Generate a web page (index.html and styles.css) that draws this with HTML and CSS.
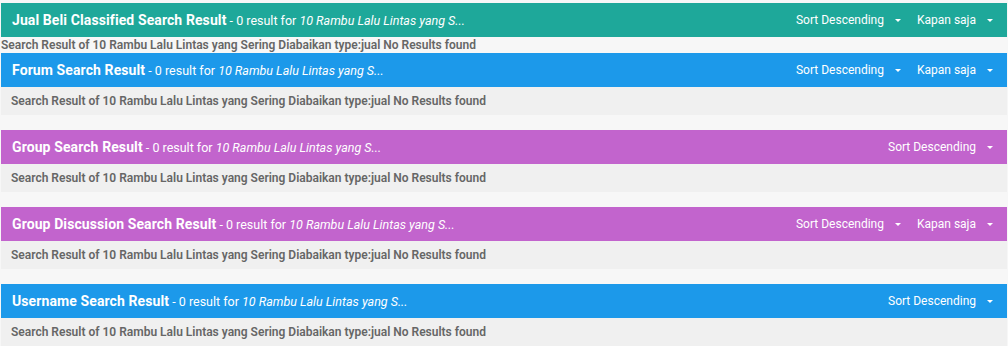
FILE: index.html
```html
<!DOCTYPE html>
<html lang="id">
<head>
    <meta charset="UTF-8">
    <meta name="viewport" content="width=device-width, initial-scale=1.0">
    <title>Search Result</title>
    <link rel="stylesheet" href="styles.css">
</head>
<body>
    <div class="results">
        <section class="result-block plain">
            <div class="result-head teal">
                <div class="head-title"><b>Jual Beli Classified Search Result</b> - 0 result for <i>10 Rambu Lalu Lintas yang S...</i></div>
                <div class="head-tools">
                    <span class="drop">Sort Descending <span class="caret"></span></span>
                    <span class="drop">Kapan saja <span class="caret"></span></span>
                </div>
            </div>
            <div class="result-body">Search Result of 10 Rambu Lalu Lintas yang Sering Diabaikan type:jual No Results found</div>
        </section>

        <section class="result-block">
            <div class="result-head blue">
                <div class="head-title"><b>Forum Search Result</b> - 0 result for <i>10 Rambu Lalu Lintas yang S...</i></div>
                <div class="head-tools">
                    <span class="drop">Sort Descending <span class="caret"></span></span>
                    <span class="drop">Kapan saja <span class="caret"></span></span>
                </div>
            </div>
            <div class="result-body">Search Result of 10 Rambu Lalu Lintas yang Sering Diabaikan type:jual No Results found</div>
        </section>

        <section class="result-block">
            <div class="result-head purple">
                <div class="head-title"><b>Group Search Result</b> - 0 result for <i>10 Rambu Lalu Lintas yang S...</i></div>
                <div class="head-tools">
                    <span class="drop">Sort Descending <span class="caret"></span></span>
                </div>
            </div>
            <div class="result-body">Search Result of 10 Rambu Lalu Lintas yang Sering Diabaikan type:jual No Results found</div>
        </section>

        <section class="result-block">
            <div class="result-head purple">
                <div class="head-title"><b>Group Discussion Search Result</b> - 0 result for <i>10 Rambu Lalu Lintas yang S...</i></div>
                <div class="head-tools">
                    <span class="drop">Sort Descending <span class="caret"></span></span>
                    <span class="drop">Kapan saja <span class="caret"></span></span>
                </div>
            </div>
            <div class="result-body">Search Result of 10 Rambu Lalu Lintas yang Sering Diabaikan type:jual No Results found</div>
        </section>

        <section class="result-block">
            <div class="result-head blue">
                <div class="head-title"><b>Username Search Result</b> - 0 result for <i>10 Rambu Lalu Lintas yang S...</i></div>
                <div class="head-tools">
                    <span class="drop">Sort Descending <span class="caret"></span></span>
                </div>
            </div>
            <div class="result-body">Search Result of 10 Rambu Lalu Lintas yang Sering Diabaikan type:jual No Results found</div>
        </section>
    </div>
</body>
</html>
```

FILE: styles.css
```css
:root { --teal: #1ea89a; --blue: #1c99ea; --purple: #c264cd; --body-bg: #f0f0f0; }
html, body { margin: 0; background: #f7f7f7; font-family: Roboto, "Liberation Sans", sans-serif; }
.results { padding: 3px 1px 0; display: flex; flex-direction: column; gap: 15px; }
.result-head { height: 34px; display: flex; align-items: center; justify-content: space-between; padding: 0 14px 0 11px; color: #fff; font-size: 12px; }
.head-title { font-size: 12.5px; }
.result-head b { font-size: 14px; font-weight: 700; letter-spacing: 0.1px; }
.teal { background: var(--teal); }
.blue { background: var(--blue); }
.purple { background: var(--purple); }
.head-tools { display: flex; gap: 16px; }
.drop { display: flex; align-items: center; gap: 11px; }
.caret { width: 0; height: 0; border-left: 3px solid transparent; border-right: 3px solid transparent; border-top: 3px solid #fff; }
.result-body { height: 28px; line-height: 28px; background: var(--body-bg); padding: 0 10px; font-size: 12px; font-weight: 600; color: #666; }
.plain { margin-bottom: -15px; }
.plain .result-body { background: none; height: 16px; line-height: 16px; padding: 0; }
```
